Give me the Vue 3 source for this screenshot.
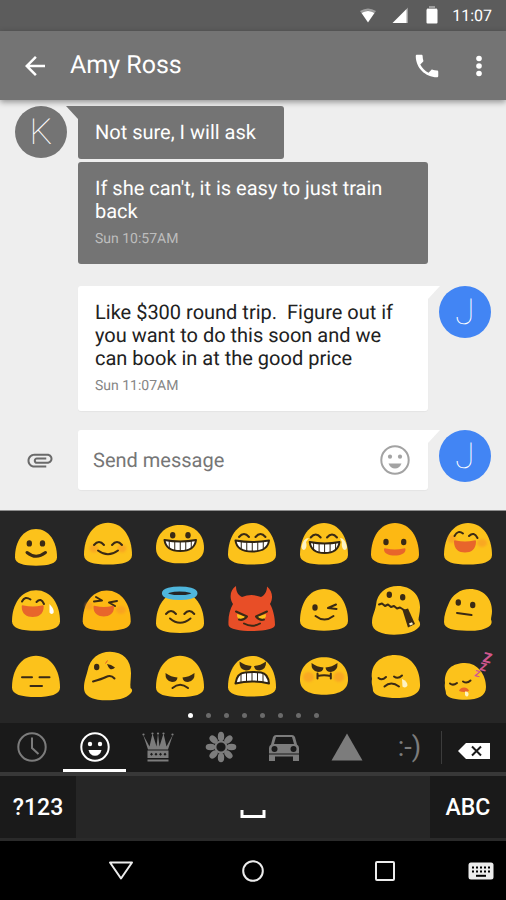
<script setup>
import { ref } from 'vue'

const draft = ref('')
const activeCategory = ref('smileys')
const pages = 8

const oval = (cx, cy, rx, ry) =>
  `M${cx - rx} ${cy}a${rx} ${ry} 0 1 0 ${rx * 2} 0a${rx} ${ry} 0 1 0 ${-rx * 2} 0Z`

/* Gumdrop body filling the box x0..x1, y0..y1 */
const dome = (x0, x1, y0, y1) => {
  const w = x1 - x0
  const h = y1 - y0
  const cx = x0 + w / 2
  const hip = y0 + h * 0.77
  return `M${x0} ${hip}C${x0} ${y0 + h * 0.34} ${x0 + w * 0.19} ${y0} ${cx} ${y0}` +
    `S${x1} ${y0 + h * 0.34} ${x1} ${hip}C${x1} ${y0 + h * 0.94} ${x1 - w * 0.2} ${y1} ${cx} ${y1}` +
    `S${x0} ${y0 + h * 0.94} ${x0} ${hip}Z`
}

/* Squashed body, widest near the middle */
const bun = (y0, y1) => {
  const mid = y0 + (y1 - y0) * 0.6
  return `M12 ${mid}C12 ${y0 + 8} 23 ${y0} 36 ${y0}S60 ${y0 + 8} 60 ${mid}C60 ${y1 - 4} 50 ${y1} 36 ${y1}S12 ${y1 - 4} 12 ${mid}Z`
}

const arc = (x, y) => `M${x - 5} ${y + 2}Q${x} ${y - 4} ${x + 5} ${y + 2}`
const dot = (x, y) => oval(x, y, 2.7, 3.2)

const grin = (x0, x1, y) => {
  const w = x1 - x0
  const c = x0 + w / 2
  return [
    ['teeth', `M${x0} ${y}Q${c} ${y + 3} ${x1} ${y}C${x1 - 1} ${y + 8} ${x1 - 7} ${y + 11} ${c} ${y + 11}S${x0 + 1} ${y + 8} ${x0} ${y}Z`],
    ['gap', `M${c} ${y + 1}v10M${c - 5.5} ${y + 1}v9.5M${c + 5.5} ${y + 1}v9.5M${c - 11} ${y + 1}v7M${c + 11} ${y + 1}v7`]
  ]
}

const openMouth = (x0, x1, y, h) => {
  const c = (x0 + x1) / 2
  return ['mouth', `M${x0} ${y + 1}Q${x0} ${y - 1} ${x0 + 2} ${y}Q${c} ${y + 2} ${x1 - 2} ${y}Q${x1} ${y - 1} ${x1} ${y + 1}C${x1} ${y + h * 0.75} ${x1 - 5} ${y + h} ${c} ${y + h}S${x0} ${y + h * 0.75} ${x0} ${y + 1}Z`]
}

const scowl = (xl, xr, y) => [
  ['ink', `M${xl - 5.5} ${y - 4}Q${xl} ${y} ${xl + 6.5} ${y + 0.5}Q${xl + 6} ${y + 5} ${xl + 1} ${y + 5}Q${xl - 6} ${y + 4} ${xl - 5.5} ${y - 4}Z`],
  ['ink', `M${xr + 5.5} ${y - 4}Q${xr} ${y} ${xr - 6.5} ${y + 0.5}Q${xr - 6} ${y + 5} ${xr - 1} ${y + 5}Q${xr + 6} ${y + 4} ${xr + 5.5} ${y - 4}Z`]
]

const faces = [
  { name: 'Slight smile', body: dome(15, 57, 18, 54.7), parts: [
    ['ink', dot(29.3, 32.4)], ['ink', dot(42.5, 32.4)],
    ['bold', 'M27 41.500Q36 49 45.500 41.500']
  ] },
  { name: 'Blushing', body: dome(12, 60, 11.7, 53.5), parts: [
    ['blush', oval(22, 37.5, 4.5, 4)], ['blush', oval(50, 37.5, 4.5, 4)],
    ['line', arc(27, 32)], ['line', arc(45, 32)], ['line', 'M26 39.5Q36 47 46 39.5']
  ] },
  { name: 'Grinning', body: bun(14, 52.3), parts: [
    ['ink', dot(28.7, 24.3)], ['ink', dot(44, 24.3)], ...grin(20.5, 52, 29)
  ] },
  { name: 'Beaming', body: dome(12, 60, 12, 53.5), parts: [
    ['line', arc(28, 24)], ['line', arc(44.5, 24)], ...grin(19.5, 53, 29.5)
  ] },
  { name: 'Tears of joy', body: dome(12, 60, 12, 53.5), parts: [
    ['line', arc(27.7, 24.5)], ['line', arc(44, 24.5)], ...grin(21.7, 51.5, 31),
    ['tear', 'M21 27Q15 27 13.5 36Q14 40 17 38.5Q19.5 36 18 31Z'],
    ['tear', 'M52 27Q57 27 59 36Q58.500 40 55.500 38.500Q53 36 54 31Z']
  ] },
  { name: 'Smile', tone: 'deep', body: dome(11, 59, 12, 53.5), parts: [
    ['ink', dot(26, 31)], ['ink', dot(43.7, 31)], openMouth(24, 45.5, 37.5, 7)
  ] },
  { name: 'Laughing', body: dome(12, 60, 12, 53.5), parts: [
    ['blush', oval(20, 28, 4, 4)], ['blush', oval(50, 32, 5, 4)],
    ['line', 'M22.500 25Q26 18.500 31 22.500'], ['line', 'M37 25Q42 20 45.500 27'], openMouth(22, 44, 29.5, 12)
  ] },

  { name: 'Nervous laugh', body: dome(12, 60, 13.3, 53.7), parts: [
    ['line', 'M22 24.500Q25 18.500 30.500 22.500'], ['line', 'M36.500 25Q41 20 44 27'], openMouth(21.7, 43.7, 28.5, 11.5),
    ['drop', 'M49.500 27Q55 33 53.500 36Q51 38 49.500 35.500Z']
  ] },
  { name: 'Squinting laugh', tone: 'deep', body: dome(10.7, 58.7, 13.5, 53.7), parts: [
    ['blush', oval(17, 29, 4, 4)], ['blush', oval(49, 33, 5, 4)],
    ['line', 'M24 20L30 23.500L22 24.500'], ['line', 'M45 24L37 25.500L43 29'], openMouth(21.5, 42, 29, 10.5)
  ] },
  { name: 'Halo', body: dome(12, 60, 15, 56), parts: [
    ['halo', oval(35.7, 16.3, 15.3, 4.3)],
    ['line', arc(27, 35)], ['line', arc(45.3, 35)], ['line', 'M26 41.500Q36 50 46.500 41.500']
  ] },
  { name: 'Imp', tone: 'imp', body: 'M12.500 48C12 39 14 32 17 27C13 21 14 13 20 9C20 15 22 18 26 20Q35.500 16 45 20C49 18 51 14 51 9.500C56.500 14 57.500 21 54 27C57 32 59 40 59 48C59 52 48 54 36 54S13 52 12.500 48Z', parts: [
    ['glow', 'M21 37L31 40Q27 44 23 42Q20.500 40 21 37Z'], ['glow', 'M50 37L40 40Q44 44 48 42Q50.500 40 50 37Z'],
    ['line', 'M20 34.500L31 39.500Q27 44 23 42.500'], ['line', 'M51 34.500L40 39.500Q44 44 48 42.500'], ['line', 'M28 46.500Q36 51 44 46.500']
  ] },
  { name: 'Wink', body: dome(12, 60, 12, 53.7), parts: [
    ['ink', dot(27, 30.5)], ['line', 'M48 27.500L40 31L48.500 32'], ['line', 'M27.500 39Q36.500 46 45.500 39']
  ] },
  { name: 'Zipped', body: 'M12 46C12 38 15 35 16 28C17 16 26 9 38 9C51 9 60 18 60 30C60 36 58.500 40 58.500 43C60 45 61 48 59 50C54 56 44 57.700 34 57.700C22 57.700 12 54 12 46Z', parts: [
    ['ink', dot(29.3, 17.7)], ['ink', dot(42.7, 20.3)],
    ['line', 'M19 27.500l3 -1l3 2.500l3 -1.500l3 2.500l3 -1l3 2.500l3 -1l4 2.500'],
    ['ink', 'M42.500 33L48 31.500L55 47L48 50.500Z'], ['tear', 'M49 46.500l3 -1.200l1 2l-3 1.200Z']
  ] },
  { name: 'Neutral', body: 'M12 45C12 38 14 33 16.500 27C20 18 28 12 38 12C52 12 60 22 60 34C60 38 59 40 59 42.500C61 47 58 49.500 53 51.500C47 54 41 54 35 53.700C22 53.500 12 52 12 45Z', parts: [
    ['ink', dot(26.3, 25.5)], ['ink', dot(40.7, 28)], ['line', 'M25 36L39.500 38']
  ] },

  { name: 'Expressionless', body: dome(12, 60, 12.7, 54), parts: [
    ['line', 'M22 34.300H32M39.500 34.300H49.500M30.500 43H42']
  ] },
  { name: 'Confused', body: 'M12 45C12 38 14 34 15.500 28C18 15 27 8.700 38 8.700C51 8.700 59 17 59 30C59 36 58 41 58.500 45Q61.500 47 59 50C54 56 44 57.300 35 57.300C22 57.300 12 54 12 45Z', parts: [
    ['ink', dot(24.7, 24)], ['ink', 'M35 21Q39 21 43 24.500Q41 27 38 26Q36 24 35 21Z'],
    ['worry', 'M33.500 20.500l2 -3'], ['line', 'M21 38.500Q30 36 34 34Q39 31.500 42.500 35.500']
  ] },
  { name: 'Angry', body: dome(12, 60, 12.7, 54), parts: [
    ...scowl(27, 45, 34), ['line', 'M28.500 45Q36 38.500 44 45']
  ] },
  { name: 'Furious', body: dome(12, 60, 13, 53.5), parts: [
    ...scowl(29, 44.5, 22.5),
    ['teeth', 'M19.500 40.500Q21 30 29 29.500Q36.500 28.500 45 29.500Q52 30.500 53 40.500Q36 36.500 19.500 40.500Z'],
    ['gap', 'M25 31v8M30.500 29.500v8.500M36 29v9M41.500 29.500v8.500M47 30.500v8.500']
  ] },
  { name: 'Grumpy', body: bun(14.3, 51.7), parts: [
    ['blush', oval(20.5, 34, 5.5, 5)], ['blush', oval(51, 34, 5.5, 5)],
    ...scowl(29, 44, 24), ['thin', 'M29.500 30.500V35.500M42.800 30.500V35.500M29.500 33Q36 31.500 42.800 33']
  ] },
  { name: 'Crying', body: 'M13 48C13 43 11 41 12 36C10 20 22 12 35 12C50 12 60 24 60 41C61 51 51 55 37 55C24 55 15 53 13 48Z', parts: [
    ['line', 'M18.500 35Q22 38 26 34'], ['line', 'M34 33.500Q38 36.500 42 32.500'], ['line', 'M24.500 43.500Q31 37.500 39 43.500'],
    ['tear', 'M42 36Q47.500 38 47.500 42.500Q45.500 46 42.500 43.500Z']
  ] },
  { name: 'Sleeping', zzz: true, body: 'M14 51C14 47 12 45 13 40C12 26 21 20 33 20C46 20 54 32 54 44C54 53 46 56.700 34 56.700C24 56.700 16 55.500 14 51Z', parts: [
    ['line', 'M18 40.500Q21 43 25 40'], ['line', 'M31 38.500Q35 41 38.500 37.500'],
    ['mouth', 'M27 48Q28 44.500 32 44.500T37 48Q32 50 27 48Z'], ['tear', 'M33 48.500Q37 48 36.500 52Q35 55 33 52Z']
  ] }
]

const petals = [0, 45, 90, 135, 180, 225, 270, 315]
const categories = ['recent', 'smileys', 'objects', 'nature', 'places', 'symbols', 'emoticons']
</script>

<template>
  <div class="phone">
    <div class="status">
      <svg class="status-icon" viewBox="0 0 18 18" aria-hidden="true">
        <path class="faint" d="M1 4Q9-1 17 4L15.500 6Q9 1.500 2.500 6Z" /><path d="M2.500 6Q9 2 15.500 6L9 15.500Z" />
      </svg>
      <svg class="status-icon signal" viewBox="0 0 18 18" aria-hidden="true">
        <path class="faint" d="M15 2.500L17 .5V16H15Z" /><path d="M15.500 2V16H1.500Z" />
      </svg>
      <svg class="status-icon battery" viewBox="0 0 18 18" aria-hidden="true">
        <path class="faint" d="M6-1H12V1H14V4H4V1H6Z" /><rect x="3.500" y="2" width="11" height="14.500" rx="1" />
      </svg>
      <span>11:07</span>
    </div>

    <header class="appbar">
      <button class="icon-btn" aria-label="Back">
        <svg width="30" height="30" viewBox="0 0 24 24"><path d="M20 11H7.830l5.590-5.590L12 4l-8 8 8 8 1.410-1.410L7.830 13H20v-2z" /></svg>
      </button>
      <h1>Amy Ross</h1>
      <button class="icon-btn call" aria-label="Call">
        <svg width="30" height="30" viewBox="0 0 24 24"><path d="M6.620 10.790c1.440 2.830 3.760 5.140 6.590 6.590l2.200-2.200c.27-.27.67-.36 1.020-.24 1.120.37 2.330.57 3.570.57.55 0 1 .45 1 1V20c0 .55-.45 1-1 1-9.390 0-17-7.610-17-17 0-.55.45-1 1-1h3.500c.55 0 1 .45 1 1 0 1.250.2 2.450.57 3.570.11.35.03.74-.25 1.020l-2.200 2.200z" /></svg>
      </button>
      <button class="icon-btn" aria-label="More options">
        <svg width="30" height="30" viewBox="0 0 30 30"><circle cx="15" cy="7.500" r="2.800" /><circle cx="15" cy="15" r="2.800" /><circle cx="15" cy="22.500" r="2.800" /></svg>
      </button>
    </header>

    <main class="thread">
      <div class="row first">
        <span class="avatar grey">K</span>
        <div class="bubble dark tail-left"><p>Not sure, I will ask</p></div>
      </div>
      <div class="row second">
        <div class="bubble dark wide">
          <p>If she can't, it is easy to just train back</p>
          <time>Sun 10:57AM</time>
        </div>
      </div>
      <div class="row mine">
        <div class="bubble light wide tail-right">
          <p>Like $300 round trip.&nbsp; Figure out if you want to do this soon and we can book in at the good price</p>
          <time>Sun 11:07AM</time>
        </div>
        <span class="avatar blue">J</span>
      </div>
      <form class="row composer" @submit.prevent>
        <button type="button" class="attach" aria-label="Attach">
          <svg width="30" height="30" viewBox="0 0 24 24"><path d="M2 12.500C2 9.460 4.460 7 7.500 7H18c2.210 0 4 1.790 4 4s-1.790 4-4 4H9.500C8.120 15 7 13.880 7 12.500S8.120 10 9.500 10H17v1.600H9.410c-1 0-1 1.800 0 1.800H18c1.300 0 2.400-1.100 2.400-2.400S19.300 8.600 18 8.600H7.500C5.400 8.600 3.600 10.400 3.600 12.500S5.400 16.400 7.500 16.400H17v1.600H7.500C4.460 18 2 15.540 2 12.500z" /></svg>
        </button>
        <div class="bubble light field tail-right">
          <input v-model="draft" type="text" placeholder="Send message" aria-label="Send message">
          <button type="button" class="emoji-toggle" aria-label="Emoji">
            <svg width="32" height="32" viewBox="0 0 32 32">
              <circle class="ring" cx="16" cy="16" r="13.700" /><circle cx="11" cy="12.700" r="2.100" /><circle cx="21" cy="12.700" r="2.100" />
              <path d="M9.500 19.500H22.500Q20.500 24.500 16 24.500T9.500 19.500Z" />
            </svg>
          </button>
        </div>
        <span class="avatar blue">J</span>
      </form>
    </main>

    <section class="keyboard">
      <div class="emoji-grid">
        <button v-for="f in faces" :key="f.name" class="emoji" :aria-label="f.name">
          <svg width="72" height="66" viewBox="0 0 72 66">
            <path class="body" :class="f.tone" :d="f.body" />
            <path v-for="(p, i) in f.parts" :key="i" :class="p[0]" :d="p[1]" />
            <g v-if="f.zzz" class="zzz">
              <text x="43" y="34" font-size="9" transform="rotate(15 46 30)">Z</text>
              <text x="48" y="28" font-size="11" transform="rotate(15 52 24)">Z</text>
              <text x="51" y="20" font-size="14" transform="rotate(15 56 15)">Z</text>
            </g>
          </svg>
        </button>
      </div>
      <div class="pager"><i v-for="n in pages" :key="n" :class="{ on: n === 1 }"></i></div>

      <div class="categories">
        <button
          v-for="c in categories" :key="c" class="category" :class="{ active: c === activeCategory }"
          :aria-label="c" @click="activeCategory = c"
        >
          <span v-if="c === 'emoticons'" class="emoticon">:-)</span>
          <svg v-else width="32" height="32" viewBox="0 0 32 32">
            <g v-if="c === 'recent'" class="stroke"><circle cx="16" cy="16" r="13.700" /><path d="M16 6.500V17L22.500 23" /></g>
            <g v-else-if="c === 'smileys'">
              <circle class="stroke" cx="16" cy="16" r="13.700" /><circle cx="11" cy="13" r="2.200" /><circle cx="21" cy="13" r="2.200" />
              <path d="M9.500 19H22.500Q21 24.800 16 24.800T9.500 19Z" />
            </g>
            <g v-else-if="c === 'objects'">
              <path d="M1 3.500L6 18.500H26L31 3.500L24.500 15.500L21.500 2.500L17.500 15.500L16 2.500L14.500 15.500L10.500 2.500L7.500 15.500Z" />
              <circle cx="1.500" cy="3.500" r="1.100" /><circle cx="10.500" cy="2.500" r="1.100" /><circle cx="16" cy="2.500" r="1.100" /><circle cx="21.500" cy="2.500" r="1.100" /><circle cx="30.500" cy="3.500" r="1.100" />
              <path d="M5.500 19.500H26.500V27H5.500ZM5.500 28.500H26.500V30.500H5.500Z" />
              <path class="cut" d="M8 23.200l1.500-1.500 1.500 1.500-1.500 1.500ZM12.500 23.200l1.500-1.500 1.500 1.500-1.500 1.500ZM17 23.200l1.500-1.500 1.500 1.500-1.500 1.500ZM21.500 23.200l1.500-1.500 1.500 1.500-1.500 1.500Z" />
            </g>
            <g v-else-if="c === 'nature'">
              <ellipse v-for="a in petals" :key="a" cx="16" cy="5.500" rx="3.200" ry="4.800" :transform="`rotate(${a} 16 16)`" />
              <circle class="stroke" cx="16" cy="16" r="5.600" />
            </g>
            <g v-else-if="c === 'places'">
              <path fill-rule="evenodd" d="M8 4H24Q26 4 27 6L29 13.500Q31 14.500 31 17V25.500H1V17Q1 14.500 3 13.500L5 6Q6 4 8 4ZM8 6L6 13H26L24 6Z" />
              <path d="M1 25H7V30H1ZM25 25H31V30H25Z" />
              <path class="cut" d="M1 22.500H31V23.500H1Z" />
              <circle class="cut" cx="6.500" cy="18" r="3" /><circle class="cut" cx="25.500" cy="18" r="3" />
            </g>
            <path v-else d="M16 2.500L31.500 29.500H.5Z" />
          </svg>
        </button>
        <button class="backspace" aria-label="Delete">
          <svg width="34" height="18" viewBox="0 0 34 18">
            <path d="M1 9L9 1H33V17H9Z" /><path class="cross" d="M15 4.500L24 13.500M24 4.500L15 13.500" />
          </svg>
        </button>
      </div>

      <div class="keys">
        <button class="key">?123</button>
        <button class="space" aria-label="Space">
          <svg width="26" height="10" viewBox="0 0 26 10"><path d="M2 1V7.500H24V1" /></svg>
        </button>
        <button class="key">ABC</button>
      </div>
    </section>

    <nav class="navbar">
      <button aria-label="Hide keyboard"><svg width="28" height="24" viewBox="0 0 28 24"><path d="M3 3.500H25L14 19.500Z" /></svg></button>
      <button aria-label="Home"><svg width="28" height="24" viewBox="0 0 28 24"><circle cx="14" cy="12" r="9.800" /></svg></button>
      <button aria-label="Recent apps"><svg width="28" height="24" viewBox="0 0 28 24"><rect x="5" y="3" width="18" height="18" rx="1" /></svg></button>
      <button class="ime" aria-label="Switch keyboard">
        <svg width="26" height="18" viewBox="0 0 26 18">
          <rect class="board" x=".5" y=".5" width="25" height="17" rx="2.500" />
          <path class="dots" d="M4 5.500H22.500M4 9.500H22.500" /><path class="bar" d="M8 13.800H18" />
        </svg>
      </button>
    </nav>
  </div>
</template>

<style>
body { background: #000; }
</style>

<style scoped>
.phone {
  display: flex;
  flex-direction: column;
  min-height: 100vh;
  font-family: Roboto, "Liberation Sans", sans-serif;
  text-rendering: geometricPrecision;
  color: #fff;
  background: #000;
}
.phone * { box-sizing: border-box; }
button { margin: 0; padding: 0; border: 0; background: none; color: inherit; font: inherit; cursor: pointer; }
svg { display: block; flex: none; }
p, h1 { margin: 0; font-weight: 400; }

.status {
  display: flex;
  align-items: center;
  justify-content: flex-end;
  height: 31px;
  padding-right: 14px;
  background: #5c5c5c;
  font-size: 16px;
}
.status-icon { width: 18px; height: 18px; margin-right: 14px; fill: #fff; overflow: visible; }
.status .battery { margin-right: 11px; }
.faint { opacity: .4; }

.appbar {
  display: flex;
  align-items: center;
  position: relative;
  height: 69px;
  padding: 0 12px 0 20px;
  background: #747474;
  box-shadow: 0 2px 6px rgba(0, 0, 0, .4);
}
.appbar h1 { flex: 1; margin-left: 20px; font-size: 25px; line-height: 30px; }
.icon-btn svg { fill: #fff; }
.call { margin-right: 22px; }

.thread { flex: 1; padding: 6px 15px 20px; background: #eee; }
.row { display: flex; align-items: flex-start; gap: 11px; }
.second { margin-top: 3px; padding-left: 63px; padding-right: 63px; }
.mine { margin-top: 22px; padding-left: 63px; }
.composer { margin-top: 19px; }

.avatar {
  display: flex;
  align-items: center;
  justify-content: center;
  flex: none;
  width: 52px;
  height: 52px;
  border-radius: 50%;
  font-size: 36px;
  font-weight: 100;
}
.grey { background: #747474; }
.blue { background: #4285f4; }

.bubble { position: relative; padding: 15px 17px; border-radius: 3px; font-size: 20px; line-height: 23px; }
.first .bubble { padding-right: 28px; }
.wide { flex: 1; }
.dark { background: #747474; }
.light { background: #fff; color: #212121; box-shadow: 0 1px 1px rgba(0, 0, 0, .04); }
.bubble time { display: block; margin-top: 7px; font-size: 14px; line-height: 19px; color: #bdbdbd; }
.light time { color: #868686; }
.tail-left { border-top-left-radius: 0; }
.tail-right { border-top-right-radius: 0; }
.tail-left::before,
.tail-right::after { content: ""; position: absolute; top: 0; width: 12px; height: 13px; background: inherit; }
.tail-left::before { right: 100%; clip-path: polygon(0 0, 100% 0, 100% 100%); }
.tail-right::after { left: 100%; clip-path: polygon(0 0, 100% 0, 0 100%); }

.attach { display: flex; justify-content: center; align-self: center; flex: none; width: 52px; padding-right: 3px; }
.attach svg { fill: #6a6a6a; }
.field { display: flex; align-items: center; flex: 1; min-width: 0; height: 60px; padding: 0 17px 0 15px; }
.field input {
  flex: 1;
  min-width: 0;
  padding: 0;
  border: 0;
  outline: 0;
  background: transparent;
  color: #212121;
  font: 20px/24px Roboto, "Liberation Sans", sans-serif;
  text-rendering: inherit;
}
.field input::placeholder { color: #767676; opacity: 1; }
.emoji-toggle svg { fill: #a3a3a3; }
.ring { fill: none; stroke: #a3a3a3; stroke-width: 2; }

.keyboard { background: #262626; border-top: 1px solid #8d8d8d; }
.emoji-grid { display: grid; grid-template-columns: repeat(7, 1fr); padding-right: 2px; }
.emoji { display: flex; justify-content: center; min-width: 0; height: 66px; }
.body { fill: #fcc21b; }
.deep { fill: #fdb813; }
.imp { fill: #e84e27; }
.ink { fill: #3a2a15; }
.line, .thin, .bold { fill: none; stroke: #3a2a15; stroke-width: 2; stroke-linecap: round; stroke-linejoin: round; }
.bold { stroke-width: 3px; }
.teeth { fill: #fff; stroke: #2f2414; stroke-width: 2; stroke-linejoin: round; }
.gap { fill: none; stroke: #2f2414; stroke-width: 1; }
.mouth { fill: #e8652b; }
.blush { fill: #f79329; opacity: .55; filter: blur(1px); }
.tear { fill: #fdf3c4; }
.drop { fill: #fff; }
.halo { fill: #262626; stroke: #4fb6dc; stroke-width: 5; }
.glow { fill: #fcc21b; }
.worry { stroke: #e0562a; stroke-width: 1; }
.zzz { fill: #d0578f; font-family: Roboto, sans-serif; font-weight: 900; }

.pager { display: flex; justify-content: center; gap: 13px; padding: 4px 0 5px; }
.pager i { width: 5px; height: 5px; border-radius: 50%; background: #6a6a6a; }
.pager .on { background: #fff; }

.categories { display: flex; height: 49px; background: #1a1a1a; }
.category {
  display: flex;
  align-items: center;
  justify-content: center;
  flex: 1;
  min-width: 0;
  border-bottom: 3px solid transparent;
  padding-top: 2px;
  color: #7c7c7c;
}
.category.active { border-color: #fff; color: #fff; }
.category svg { fill: currentColor; }
.category .stroke { fill: none; stroke: currentColor; stroke-width: 2; }
.category .cut { fill: #1a1a1a; }
.category ellipse + .stroke { fill: #1a1a1a; }
.emoticon { font-size: 27px; line-height: 30px; }
.backspace { display: flex; align-items: center; justify-content: center; flex: none; width: 65px; position: relative; padding-top: 6px; }
.backspace::before { content: ""; position: absolute; left: 0; top: 8px; bottom: 8px; width: 1px; background: #3c3c3c; }
.backspace svg { fill: #fff; }
.cross { stroke: #1a1a1a; stroke-width: 2; }

.keys { display: flex; height: 69px; border-top: 4px solid #383838; border-bottom: 3px solid #2a2a2a; }
.key { flex: none; width: 76px; background: #1a1a1a; font-size: 23px; font-weight: 500; }
.space { display: flex; align-items: center; justify-content: center; flex: 1; padding-top: 14px; }
.space path { fill: none; stroke: #fff; stroke-width: 3; }

.navbar { display: grid; grid-template-columns: 55px 1fr 1fr 1fr 55px; height: 59px; }
.navbar button { display: flex; align-items: center; justify-content: center; }
.navbar button:first-child { grid-column: 2; }
.navbar .ime { padding-left: 5px; }
.navbar svg { fill: none; stroke: #ececec; stroke-width: 2; stroke-linejoin: round; }
.navbar .board { fill: #ececec; stroke: none; }
.navbar .dots, .navbar .bar { stroke: #000; }
.navbar .dots { stroke-dasharray: 2 2; }
</style>
